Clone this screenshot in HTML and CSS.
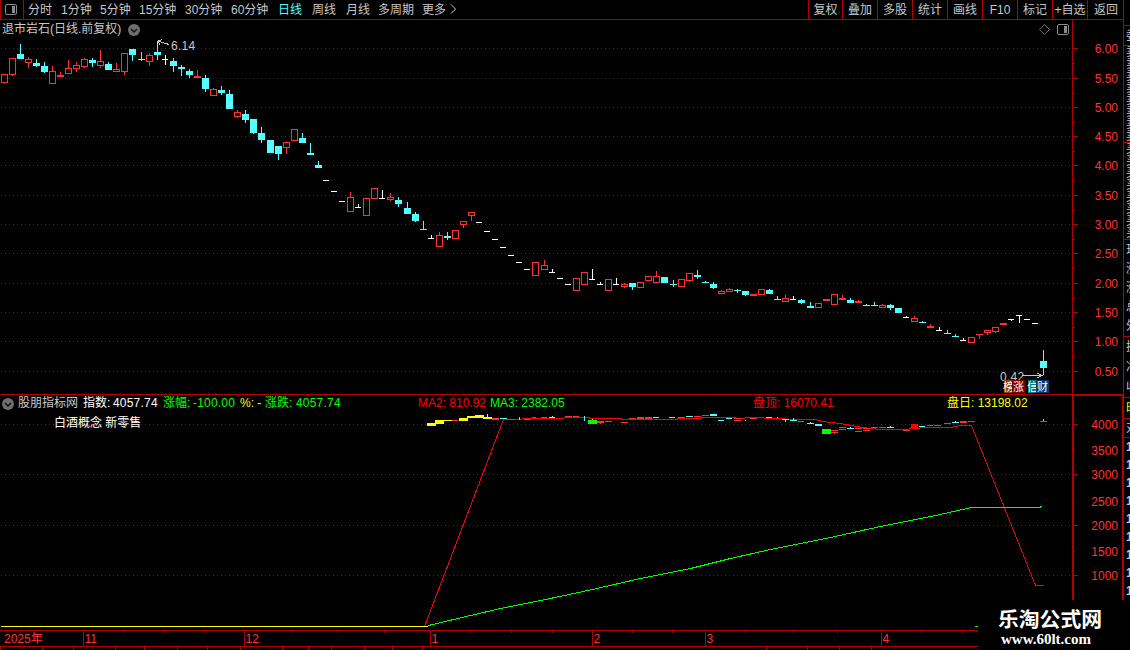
FILE: index.html
```html
<!DOCTYPE html>
<html lang="zh-CN">
<head>
  <meta charset="UTF-8" />
  <meta name="viewport" content="width=device-width, initial-scale=1.0"/>
  <title>退市岩石 日线</title>
  <link rel="stylesheet" href="styles.css">
</head>
<body>
  <div class="terminal">
    <main class="workspace">
      <nav class="toolbar">
        <button class="panel-toggle" title="侧栏">
          <svg viewBox="0 0 12 11"><rect x=".5" y=".5" width="11" height="10" rx="1.5"/><path class="fill" d="M7 2h3v7H7z"/></svg>
        </button>
        <div class="periods">
          <span>分时</span>
          <span>1分钟</span>
          <span>5分钟</span>
          <span>15分钟</span>
          <span>30分钟</span>
          <span>60分钟</span>
          <span class="active">日线</span>
          <span>周线</span>
          <span>月线</span>
          <span>多周期</span>
          <span class="more">更多<svg viewBox="0 0 6 10"><path d="M1 .5L5.500 5L1 9.500"/></svg></span>
        </div>
        <div class="tools">
          <span>复权</span>
          <span>叠加</span>
          <span>多股</span>
          <span>统计</span>
          <span>画线</span>
          <span>F10</span>
          <span>标记</span>
          <span>+自选</span>
          <span>返回</span>
        </div>
      </nav>

      <section class="pane price-pane">
        <svg id="price" class="chart" viewBox="0 20 1124 374"></svg>
        <header class="pane-header">
          <span class="stock-name">退市岩石(日线.前复权)</span>
          <svg class="chevron" viewBox="0 0 12 12"><circle cx="6" cy="6" r="6"/><path d="M3 5l3 3l3-3"/></svg>
          <span class="pane-icons">
            <svg class="diamond" viewBox="0 0 11 11"><path d="M5.500 .5l5 5l-5 5l-5-5z"/></svg>
            <svg class="split" viewBox="0 0 12 11"><rect x=".5" y=".5" width="11" height="10" rx="1.5"/><path class="fill" d="M7 2h3v7H7z"/></svg>
          </span>
        </header>
      </section>

      <section class="pane indicator-pane">
        <svg id="indicator" class="chart" viewBox="0 394 1124 236"></svg>
        <div class="legend">
          <svg class="chevron" viewBox="0 0 12 12"><circle cx="6" cy="6" r="6"/><path d="M3 5l3 3l3-3"/></svg>
          <span class="muted">股朋指标网</span>
          <span class="white">指数:</span>
          <span class="white num">4057.74</span>
          <span class="green">涨幅:</span>
          <span class="green num">-100.00</span>
          <span class="yellow">%: -</span>
          <span class="green">涨跌:</span>
          <span class="green num">4057.74</span>
          <span class="red">MA2: 810.92</span>
          <span class="green">MA3: 2382.05</span>
          <span class="red">盘顶: 16070.41</span>
          <span class="yellow">盘日: 13198.02</span>
        </div>
        <div class="concepts">白酒概念 新零售</div>
      </section>

      <svg id="timeline" class="timeline" viewBox="0 630 1124 17"></svg>
      <div class="ticker" id="ticker"></div>
    </main>

    <aside class="quotes">
      <div class="quote-group head">委</div>
      <div class="quote-group five"><i>卖</i><i>卖</i><i>卖</i><i>卖</i><i>卖</i><i>卖</i><i>卖</i><i>卖</i></div>
      <div class="quote-group five"><i>买</i><i>买</i><i>买</i><i>买</i><i>买</i><i>买</i><i>买</i><i>买</i></div>
      <div class="quote-group info"><i>现</i><i>涨</i><i>涨</i><i>总</i><i>外</i></div>
      <div class="quote-group last"><i>换</i><i>净</i><i>收</i></div>
      <div class="quote-group tab">时</div>
      <div class="quote-group date">对</div>
      <div class="quote-group ticks"><i>1</i><i>1</i><i>1</i><i>1</i><i>1</i><i>1</i><i>1</i><i>1</i><i>1</i></div>
    </aside>
  </div>

  <div class="brand">
    <strong>乐淘公式网</strong>
    <em>www.60lt.com</em>
  </div>

  <script src="chart.js"></script>
</body>
</html>
```
FILE: styles.css
```css
:root {
  --bg: #000;
  --line: #b00000;
  --up: #ff3232;
  --down: #54ffff;
  --text: #c8c8c8;
  --green: #00ff00;
  --yellow: #ffff00;
}

* {
  box-sizing: border-box;
}

body {
  margin: 0;
  height: 650px;
  overflow: hidden;
  background: var(--bg);
  color: var(--text);
  font: 12px/18px "Liberation Sans", "Noto Sans CJK SC", sans-serif;
}

.terminal {
  display: grid;
  grid-template-columns: 1123px 7px;
  height: 650px;
}

.workspace {
  display: grid;
  grid-template-rows: 20px 374px 236px 17px 3px;
  min-width: 0;
}

svg {
  display: block;
}

/* toolbar */
.toolbar {
  display: flex;
  height: 20px;
  border-bottom: 1px solid var(--line);
  line-height: 20px;
}

.panel-toggle {
  width: 24px;
  padding: 0 0 0 4px;
  border: 0;
  border-left: 1px solid var(--line);
  border-right: 1px solid var(--line);
  background: none;
}

.panel-toggle svg,
.split {
  width: 12px;
  height: 11px;
  fill: none;
  stroke: #8c8c8c;
}

.fill {
  fill: #8c8c8c;
  stroke: none;
}

.periods {
  display: grid;
  grid-template-columns: 33px 39px 39px 46px 46px 47px 34px 34px 32px 44px 40px;
  padding-left: 4px;
  height: 19px;
  white-space: nowrap;
}

.periods .active {
  color: var(--down);
}

.more {
  display: flex;
  gap: 4px;
}

.more svg {
  width: 6px;
  height: 10px;
  margin-top: 4px;
  fill: none;
  stroke: var(--text);
}

.tools {
  display: grid;
  grid-template-columns: 34px repeat(7, 35px) 37px;
  height: 19px;
  margin-left: auto;
  text-align: center;
  white-space: nowrap;
}

.tools span {
  height: 19px;
  border-left: 1px solid var(--line);
}

/* chart panes */
.pane {
  position: relative;
}

.chart {
  width: 1124px;
  height: 100%;
  shape-rendering: crispEdges;
}

.chart text,
.timeline text {
  font-size: 12px;
  fill: var(--up);
}

.chart .mark {
  fill: var(--text);
  letter-spacing: .3px;
}

.chart .badge {
  font-size: 11px;
  fill: #fff;
}

.pane-header {
  position: absolute;
  top: 0;
  left: 0;
  display: flex;
  align-items: center;
  width: 1072px;
  height: 19px;
  padding-left: 2px;
}

.stock-name {
  width: 126px;
  white-space: nowrap;
  line-height: 19px;
}

.chevron {
  width: 12px;
  height: 12px;
  fill: #6e6e6e;
}

.chevron path {
  fill: none;
  stroke: #111;
  stroke-width: 1.5;
}

.pane-icons {
  display: flex;
  align-items: center;
  gap: 7px;
  margin-left: auto;
  padding-right: 3px;
}

.diamond {
  width: 11px;
  height: 11px;
  fill: none;
  stroke: #6e6e6e;
}

.legend {
  position: absolute;
  top: 0;
  left: 2px;
  display: grid;
  grid-template-columns: 16px 65px 30px 50px 30px 47px 25px 31px 122px 72px 263px 194px 120px;
  align-items: center;
  height: 19px;
  line-height: 19px;
  white-space: nowrap;
}

.num { letter-spacing: .2px; }

.muted { color: var(--text); }
.white { color: #fff; }
.green { color: var(--green); }
.yellow { color: var(--yellow); }
.red { color: #f00; }

.concepts {
  position: absolute;
  top: 20px;
  left: 54px;
  color: #fff;
}

.timeline {
  width: 1124px;
  height: 17px;
  shape-rendering: crispEdges;
}

.ticker {
  display: flex;
  height: 3px;
  overflow: hidden;
}

.ticker span {
  flex: none;
  border-left: 1px solid var(--line);
}

/* quote column, cut off by the window edge */
.quotes {
  display: flex;
  flex-direction: column;
  padding-top: 25px;
  border-left: 1px solid var(--line);
  overflow: hidden;
}

.quote-group {
  display: flex;
  flex-direction: column;
  justify-content: space-around;
  flex: none;
  padding-left: 2px;
  border-top: 1px solid var(--line);
  overflow: hidden;
}

.quote-group i {
  font-style: normal;
  line-height: 12px;
}

.head { height: 20px; }
.five { height: 97px; }
.info { height: 97px; }
.last { height: 61px; }
.date { height: 19px; }

.tab {
  height: 21px;
  color: var(--yellow);
}

.ticks {
  height: 163px;
  font-weight: bold;
}

.brand {
  position: absolute;
  right: 0;
  bottom: 0;
  display: flex;
  flex-direction: column;
  width: 152px;
  height: 50px;
  padding: 6px 0 0 20px;
  background: #000;
  color: #fff;
}

.brand strong {
  font: bold 20.8px/25px "Noto Sans CJK SC", sans-serif;
}

.brand em {
  padding-left: 3px;
  font: bold 15px/16px "Liberation Serif", serif;
}
```
FILE: chart.js
```js
const UP = '#ff3232', DOWN = '#54ffff', FLAT = '#ffffff', LINE = '#b00000', GRID = '#a00000';
const COLORS = { r: UP, c: DOWN, w: FLAT, y: '#ffff00', g: '#00ff00', R: '#ff0000' };

const rect = (x, y, w, h, fill) => `<rect x="${x}" y="${y}" width="${w}" height="${h}" fill="${fill}"/>`;
const box = (x, y, w, h, color) =>
  `<rect x="${x + .5}" y="${y + .5}" width="${w - 1}" height="${h - 1}" fill="none" stroke="${color}"/>`;
const dots = (y) =>
  `<path d="M1 ${y + .5}H1072" stroke="${GRID}" stroke-dasharray="1 3" fill="none"/>`;
const text = (x, y, str, cls = '', anchor = 'start') =>
  `<text x="${x}" y="${y}" class="${cls}" text-anchor="${anchor}">${str}</text>`;
const curve = (points, color) =>
  `<polyline points="${points}" fill="none" stroke="${color}" transform="translate(.5 .5)"/>`;

// center x, colour, high, body top, body bottom, low
const candles = `
4 r 74 74 83 83|12 r 58 58 75 76|20 c 44 54 59 59|28 r 57 59 63 68|36 c 59 63 66 67|44 c 62 66 72 73
52 r 66 71 84 84|60 r 72 75 77 77|68 r 60 68 74 74|76 r 62 65 69 72|84 r 58 59 67 68|92 c 58 60 63 67
100 r 50 61 66 68|108 c 62 64 70 70|116 r 63 69 72 72|124 r 53 53 72 75|132 c 49 49 55 61|141 c 52 59 60 61
149 r 53 55 62 66|157 c 41 52 55 60|165 w 55 59 60 65|173 c 58 61 66 72|181 c 65 67 69 76|189 c 69 71 75 78
197 r 70 76 78 78|205 c 75 78 89 92|213 r 88 89 96 96|221 c 86 90 93 95|229 c 90 94 109 109|237 r 110 112 117 118
245 c 110 114 120 123|253 c 119 119 133 134|261 c 127 133 140 143|270 c 140 140 153 153|278 c 146 146 154 160
286 r 142 142 148 154|294 r 129 129 141 141|302 c 133 138 143 143|310 c 143 153 155 155|318 c 161 165 168 168
326 w 180 180 181 181|334 w 191 191 192 192|342 w 201 201 202 202|350 r 192 197 212 212|358 w 204 207 208 208
366 r 198 198 216 216|374 r 188 188 199 199|382 w 190 198 199 199|390 r 193 197 200 201|398 c 197 200 204 207
407 c 202 208 214 214|415 c 212 214 221 222|423 c 221 229 230 230|431 w 235 238 239 239|439 r 232 235 247 247
447 c 232 236 238 240|455 r 230 230 239 239|463 r 221 221 225 228|471 r 212 212 216 221|479 w 222 222 223 223
487 w 231 231 232 232|495 w 239 239 240 240|503 w 247 247 248 248|511 w 255 255 256 256|519 w 262 262 263 263
527 w 269 269 270 270|535 r 262 262 276 276|544 r 260 265 270 270|552 w 269 272 273 273|560 w 278 278 279 279
568 w 284 284 285 285|576 r 278 278 291 291|584 r 272 272 285 285|592 w 269 279 280 280|600 w 282 284 285 285
608 r 279 279 291 291|616 w 278 284 285 285|624 r 283 284 287 288|632 c 283 283 287 290|640 r 282 282 288 288
648 r 276 276 281 281|656 r 271 276 283 283|664 c 277 277 283 283|673 c 280 284 285 287|681 r 279 279 287 287
689 r 273 273 281 282|697 c 270 275 277 279|705 c 281 282 283 283|713 c 282 284 288 289|721 r 290 291 294 294
729 r 288 289 292 292|737 c 289 290 291 293|745 c 291 291 295 296|753 r 294 294 296 296|761 r 289 289 295 295
769 c 289 290 294 294|777 c 296 299 300 300|785 r 295 298 302 302|793 w 296 299 300 300|801 c 299 300 303 304
810 c 302 306 308 308|818 r 303 303 308 308|826 r 299 299 301 301|834 r 294 294 305 305|842 r 295 298 300 300
850 c 298 300 303 303|858 r 300 301 303 303|866 c 304 305 306 306|874 c 302 305 306 306|882 r 304 305 308 308
890 c 304 305 308 310|898 c 308 308 313 313|906 w 316 317 318 318|914 r 316 318 322 322|922 c 321 322 323 323
930 r 324 326 328 328|939 w 327 330 331 331|947 c 330 333 334 334|955 c 334 336 337 337|963 w 338 340 341 341
971 r 337 337 343 343|979 r 334 334 335 339|987 r 330 330 333 335|995 r 327 327 332 333|1003 r 323 323 325 325
1011 w 319 319 320 321|1019 w 315 315 316 323|1027 w 319 319 320 320|1035 w 323 323 324 324|1043 c 350 361 368 375
`.trim().split(/[|\n]/).map(row => row.split(' '));

function drawCandle([cx, kind, ...levels]) {
  const x = +cx, color = COLORS[kind];
  const [high, top, bottom, low] = levels.map(Number);
  let out = '';
  if (top > high) out += rect(x, high, 1, top - high, color);
  if (low > bottom) out += rect(x, bottom, 1, low - bottom, color);
  if (kind === 'r' && bottom - top > 2) out += box(x - 3, top, 7, bottom - top, color);
  else out += rect(x - 3, top, kind === 'w' ? 6 : 7, bottom - top, color);
  return out;
}

function drawPrice() {
  const rows = [48, 78, 107, 136, 165, 195, 224, 253, 283, 312, 341, 371];
  let out = rows.map(dots).join('');
  out += rect(1072, 20, 1, 374, LINE);
  rows.forEach((y, i) => {
    out += rect(1073, y, 5, 1, LINE) + text(1118, y + 5, (6 - i * .5).toFixed(2), '', 'end');
    if (i < 11) out += rect(1073, y + 15, 2, 1, LINE);
  });
  out += candles.map(drawCandle).join('');
  // high and low markers
  out += '<path d="M158 41l11 3.500M158 41l4-1.500M158 41l2 4" fill="none" stroke="#c8c8c8"/>';
  out += text(171, 50, '6.14', 'mark') + text(1000, 381, '0.42', 'mark');
  out += '<path d="M1022 375.500H1042M1037 373l5 2.500l-5 2.500" fill="none" stroke="#c8c8c8"/>';
  // event badges
  out += rect(1004, 380, 13, 13, '#8a4000') + text(1003, 391, '榜', 'badge');
  out += rect(1012, 380, 13, 13, '#780000') + text(1013, 391, '涨', 'badge');
  out += rect(1028, 380, 13, 13, '#008080') + text(1027, 391, '信', 'badge');
  out += rect(1036, 380, 13, 13, '#003870') + text(1037, 391, '财', 'badge');
  document.getElementById('price').innerHTML = out;
}

// colour, x, y, width, height
const marks = `
y 427 423 9 3|y 435 420 9 4|y 444 420 8 1|r 452 420 6 1|y 459 418 9 3|y 467 416 9 2|y 475 415 9 3|y 483 417 9 2
c 487 414 1 3|r 492 418 7 2|c 500 418 7 1|r 508 419 7 1|c 519 417 1 3|r 524 419 7 1|r 532 417 4 1|r 541 417 6 1
c 549 417 6 1|c 552 416 1 1|r 565 416 7 1|r 573 416 6 1|c 584 416 1 5|g 588 420 9 4|c 592 419 1 1|r 597 421 7 2
r 600 423 1 1|r 605 421 7 1|r 621 422 7 1|r 629 418 7 1|r 637 417 7 2|r 645 417 7 2|c 653 417 6 1|c 669 417 6 1
r 678 417 7 1|c 686 416 7 1|r 694 416 7 1|r 702 415 7 1|c 710 414 7 2|c 718 420 6 1|c 726 418 6 1|r 734 418 7 1
r 734 420 7 1|c 745 420 1 1|r 750 418 7 1|c 766 417 6 1|c 777 417 1 1|c 782 419 7 1|c 785 419 1 3|c 790 420 7 1
c 793 418 1 2|r 798 421 6 1|c 807 423 7 1|c 810 422 1 1|c 815 424 7 2|g 822 429 9 5|r 831 430 7 1|r 831 432 7 1
r 834 433 1 1|r 839 427 7 1|r 839 429 7 1|c 847 428 7 1|c 850 427 1 1|r 855 428 7 1|r 855 431 7 1|r 863 428 7 1
r 863 430 7 1|r 871 427 7 1|r 879 427 7 1|c 887 427 7 1|c 890 426 1 1|r 903 430 7 1|R 911 424 7 5|c 919 426 6 1
r 927 425 6 1|r 934 425 7 1|r 944 423 7 1|c 952 422 7 1|c 955 421 1 1|r 960 421 7 2|r 968 421 7 1
c 1043 419 1 2|r 1040 421 7 1
`.trim().split(/[|\n]/).map(row => row.split(' '));

function drawIndicator() {
  let out = [424, 474, 525, 575].map(dots).join('');
  out += rect(0, 394, 1124, 1, LINE);
  out += rect(1072, 394, 2, 236, LINE) + rect(1122, 394, 2, 236, LINE) + rect(1072, 394, 52, 2, LINE);
  [424, 450, 474, 501, 525, 551, 575].forEach((y, i) => {
    out += rect(1074, y, i % 2 ? 1 : 4, 1, LINE) + text(1118, y + 5, 4000 - i * 500, '', 'end');
  });
  out += curve('424,626 503,419 540,418 588,417 590,418 620,418 622,419 676,419 678,418 700,418 702,417 730,417 740,418 749,417 778,418 790,419 815,419 822,421 840,423 862,427 880,429 903,429 925,427 950,427 960,425 971,425 1025,560 1035,585 1043,585', '#ff0000');
  out += marks.map(([kind, x, y, w, h]) => rect(x, y, w, h, COLORS[kind])).join('');
  out += curve('428,625 470,615 500,608 545,599 592,589 640,578 690,568 730,558 770,549 830,537 880,526 935,515 971,507 1038,507 1042,506', '#00ff00');
  out += rect(1, 626, 427, 1, '#ffff00') + rect(975, 626, 3, 1, '#00ff00');
  document.getElementById('indicator').innerHTML = out;
}

function drawTimeline() {
  let out = rect(0, 630, 1124, 1, LINE) + rect(0, 646, 1124, 1, LINE);
  out += text(4, 643, '2025年');
  [[83, '11'], [244, '12'], [430, '1'], [592, '2'], [705, '3'], [881, '4']].forEach(([x, label]) => {
    out += rect(x, 631, 1, 15, LINE) + text(x + 1.5, 643, label);
  });
  [123, 164, 204, 291, 337, 384, 470, 511, 552, 632, 672, 745, 793, 837, 921, 962].forEach(x => {
    out += rect(x, 631, 1, 2, LINE);
  });
  document.getElementById('timeline').innerHTML = out;
}

function drawTicker() {
  const stops = [0, 42, 73, 115, 144, 177, 207, 240, 282, 308, 331, 364, 392, 422, 766, 807, 839, 871, 1123];
  document.getElementById('ticker').innerHTML = stops.slice(1)
    .map((end, i) => `<span style="width:${end - stops[i]}px"></span>`).join('');
}

drawPrice();
drawIndicator();
drawTimeline();
drawTicker();
```
